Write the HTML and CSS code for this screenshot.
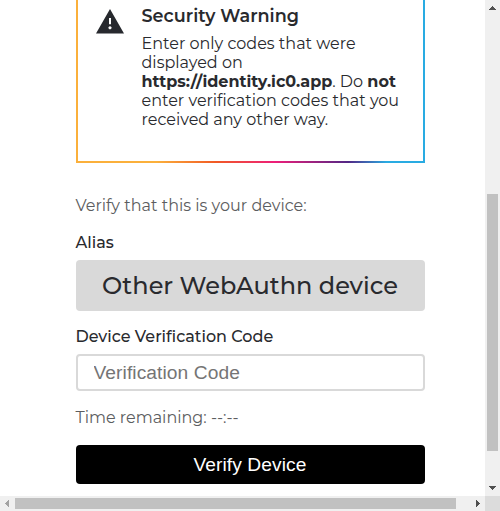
FILE: index.html
```html
<!DOCTYPE html>
<html lang="en">
<head>
<meta charset="utf-8">
<title>Verify Device</title>
<link rel="stylesheet" href="styles.css">
</head>
<body>
<div class="window">
  <main class="page">
    <section class="warning">
      <svg class="warning-icon" viewBox="0 0 28 25" width="28" height="25"><path fill="#27292e" fill-rule="evenodd" d="M14 0 28 24.5H0ZM13 9h2v6.2H13ZM14 17.2a1.6 1.6 0 1 0 .01 0Z"/></svg>
      <div class="warning-body">
        <h1 class="warning-title">Security Warning</h1>
        <p class="warning-text">
          Enter only codes that were<br>displayed on<br>
          <strong>https://identity.ic0.app</strong>. Do <strong>not</strong><br>
          enter verification codes that you<br>received any other way.
        </p>
      </div>
    </section>
    <p class="intro">Verify that this is your device:</p>
    <h2 class="label alias-label">Alias</h2>
    <div class="alias">Other WebAuthn device</div>
    <label class="label code-label" for="code">Device Verification Code</label>
    <input class="code" id="code" placeholder="Verification Code">
    <p class="remaining">Time remaining: --:--</p>
    <button class="verify">Verify Device</button>
  </main>
  <div class="bar vertical">
    <svg width="15" height="15"><path fill="#505050" d="M4 10h7L7.5 6Z"/></svg>
    <div class="thumb"></div>
    <svg width="15" height="15"><path fill="#505050" d="M4 5h7L7.5 9Z"/></svg>
  </div>
  <div class="bar horizontal">
    <svg width="15" height="15"><path fill="#a3a3a3" d="M9 4v7L5 7.5Z"/></svg>
    <div class="thumb"></div>
    <svg width="15" height="15"><path fill="#505050" d="M6 4v7l4-3.500Z"/></svg>
  </div>
  <div class="corner"></div>
</div>
</body>
</html>
```

FILE: styles.css
```css
* { box-sizing: border-box; }
body { margin: 0; background: #fff; color: #292a2e; font-family: Montserrat, Inter, sans-serif; font-size: 16px; overflow: hidden; }
h1, h2, p { margin: 0; }
.window { display: grid; grid-template: 496px 15px / 485px 15px; }
.page { display: flex; flex-direction: column; padding: 0 60.5px 0 75.5px; overflow: hidden; white-space: nowrap; }
.warning { display: flex; gap: 17.5px; height: 163px; padding: 9px 0 0 18.5px; border: 2px solid; border-top: 0; border-image: linear-gradient(270deg, #29abe2 11%, #522785 22%, #ed1e79 43%, #f15a24 60%, #fbb03b 77%) 2; }
.warning-icon { flex: none; }
.warning-title { margin-top: -4px; font-size: 17.6px; line-height: 22px; font-weight: 600; letter-spacing: .03px; }
.warning-text { margin-top: 7px; line-height: 19px; font-weight: 400; }
strong { font-weight: 700; }
.intro { margin-top: 33px; line-height: 20px; font-weight: 400; color: #5c5d60; }
.label { font-size: 16px; line-height: 20px; font-weight: 500; }
.alias-label { margin-top: 17px; }
.alias { margin-top: 7px; height: 51px; line-height: 51px; text-align: center; border-radius: 4px; background: #d9d9d9; font-size: 24px; font-weight: 500; }
.code-label { margin-top: 16px; }
.code { margin: 7px 0 0; width: 349px; height: 37px; padding: 0 16px; border: 2px solid #d9d9d9; border-radius: 4px; font: 19.2px "Liberation Sans", sans-serif; letter-spacing: .08px; }
.code::placeholder { color: #757575; }
.remaining { margin-top: 17px; line-height: 20px; font-weight: 400; color: #5c5d60; }
.verify { margin: 17px 0 0; height: 39px; padding: 0; border: 0; border-radius: 4px; background: #000; color: #fff; font: 19.2px "Liberation Sans", sans-serif; letter-spacing: .08px; }
.bar { display: flex; background: #f0f0f0; }
.bar svg { flex: none; display: block; shape-rendering: crispEdges; }
.thumb { background: #c1c1c1; }
.vertical { flex-direction: column; justify-content: space-between; }
.vertical .thumb { margin: 179px 2px 30px; height: 257px; }
.horizontal { justify-content: space-between; }
.horizontal .thumb { width: 441px; margin: 2px 14px 2px 0; }
.corner { background: #dcdcdc; }
```
